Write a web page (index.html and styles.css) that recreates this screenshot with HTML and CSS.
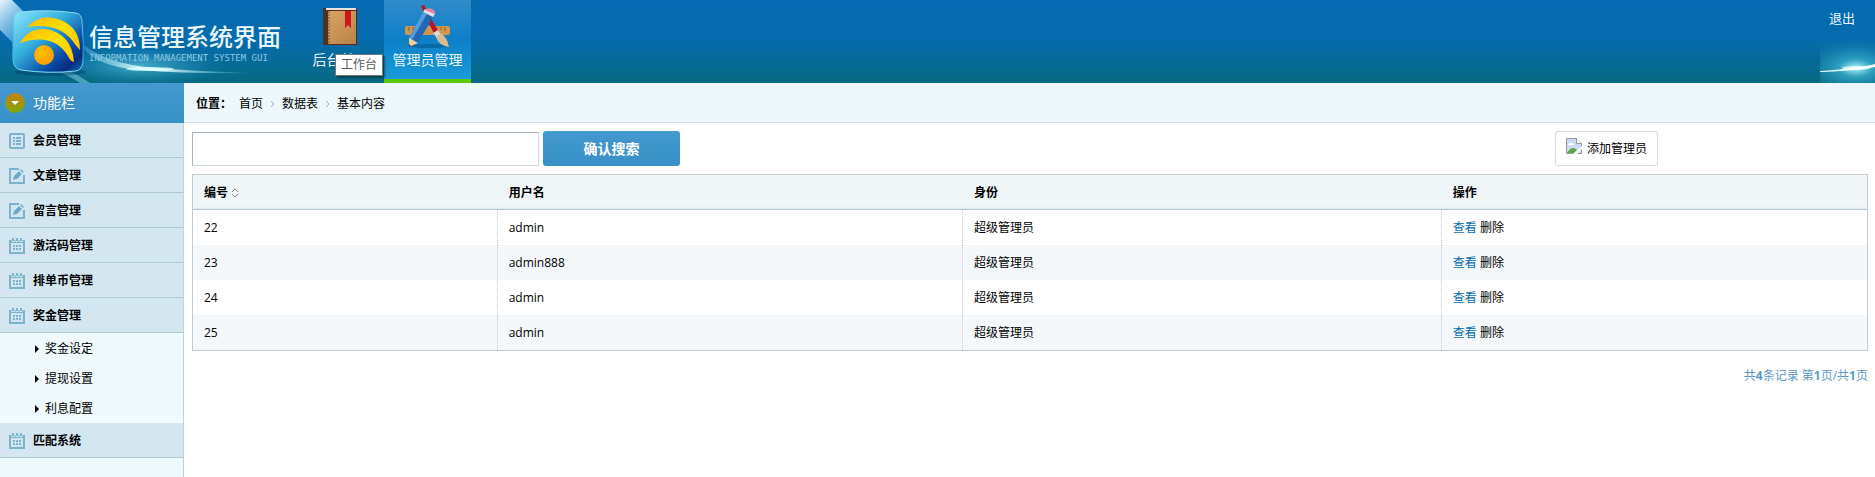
FILE: index.html
```
<!DOCTYPE html>
<html lang="zh-CN">
<head>
<meta charset="utf-8">
<title>信息管理系统界面</title>
<link rel="stylesheet" href="styles.css">
</head>
<body>

<!-- 图标 -->
<svg class="sprite" width="0" height="0">
	<symbol id="ico-list" viewBox="0 0 16 16">
		<rect x="1" y="1" width="14" height="14" rx="1" fill="none" stroke="#7db3cc" stroke-width="2"/>
		<path d="M4 5h2M7 5h5M4 8h2M7 8h5M4 11h2M7 11h5" stroke="#7db3cc" stroke-width="2"/>
	</symbol>
	<symbol id="ico-edit" viewBox="0 0 16 16">
		<path d="M10 1H1v14h14V7" fill="none" stroke="#7db3cc" stroke-width="2"/>
		<path d="M4 12l1-4 5-5 3 3-5 5zM11 2l1-1 3 3-1 1z" fill="#6fa9c6"/>
	</symbol>
	<symbol id="ico-date" viewBox="0 0 16 16">
		<path d="M1 3h14v12H1z" fill="none" stroke="#7db3cc" stroke-width="2"/>
		<path d="M1 4h14" stroke="#7db3cc" stroke-width="2"/>
		<path d="M4 0v4M8 0v4M12 0v4" stroke="#d4e7f0" stroke-width="3"/>
		<path d="M4 0v3M8 0v3M12 0v3" stroke="#7db3cc" stroke-width="2"/>
		<path d="M4 8h2M7 8h2M10 8h2M4 11h2M7 11h2M10 11h2" stroke="#7db3cc" stroke-width="2"/>
	</symbol>
</svg>

<header class="top">
	<a href="#" class="logo">
		<svg class="glow" width="300" height="83" viewBox="0 0 300 83" aria-hidden="true">
			<defs>
				<linearGradient id="ray" x1="0" y1="0" x2="1" y2="0">
					<stop offset="0" stop-color="#8fdcf5" stop-opacity=".2"/>
					<stop offset=".4" stop-color="#e8ffff"/>
					<stop offset="1" stop-color="#7fd8ee" stop-opacity="0"/>
				</linearGradient>
				<radialGradient id="halo">
					<stop offset="0" stop-color="#7fe0f5" stop-opacity=".8"/>
					<stop offset="1" stop-color="#2aa3cf" stop-opacity="0"/>
				</radialGradient>
				<linearGradient id="beam" gradientUnits="userSpaceOnUse" x1="0" y1="0" x2="60" y2="60">
					<stop offset="0" stop-color="#eaf6ff"/>
					<stop offset=".4" stop-color="#6fbbe8" stop-opacity=".7"/>
					<stop offset="1" stop-color="#5db7e6" stop-opacity="0"/>
				</linearGradient>
				<linearGradient id="tile" x1="0" y1="0" x2="1" y2="1">
					<stop offset="0" stop-color="#8fe6fa"/>
					<stop offset=".4" stop-color="#35b0df"/>
					<stop offset=".7" stop-color="#0a4fa8"/>
					<stop offset=".85" stop-color="#062a80"/>
					<stop offset="1" stop-color="#1376c8"/>
				</linearGradient>
				<linearGradient id="shine" x1="0" y1="0" x2="0" y2="1">
					<stop offset="0" stop-color="#8fdcf2"/>
					<stop offset=".6" stop-color="#2496cf"/>
					<stop offset="1" stop-color="#7ee4f5"/>
				</linearGradient>
				<radialGradient id="ball" cx=".4" cy=".35">
					<stop offset="0" stop-color="#ffc400"/>
					<stop offset="1" stop-color="#ffa200"/>
				</radialGradient>
				<linearGradient id="gold" x1="0" y1="0" x2="1" y2="1">
					<stop offset="0" stop-color="#ffb800"/>
					<stop offset=".5" stop-color="#ffe000"/>
					<stop offset="1" stop-color="#ffc400"/>
				</linearGradient>
			</defs>
			<path d="M0 0h12L40 28 20 50 0 30z" fill="url(#beam)"/>
			<path d="M62 68Q76 73 90 83H80Q70 76 58 72z" fill="#8ad8ea" opacity=".5"/>
			<ellipse cx="140" cy="66" rx="85" ry="20" fill="url(#halo)" opacity=".7"/>
			<path d="M80 42Q105 64 155 68T255 73Q190 74 140 70T80 42z" fill="url(#ray)"/>
			<ellipse cx="150" cy="69" rx="24" ry="2" fill="#dfffff" opacity=".8"/>
			<ellipse cx="50" cy="72" rx="36" ry="4" fill="#043a66" opacity=".4"/>
			<path d="M20 12Q48 9 76 13 82 14 82 22 84 44 83 62 82 70 76 71 48 74 21 70 14 69 13 60 12 42 14 18 15 12 20 12z" fill="url(#tile)" stroke="url(#shine)"/>
			<path d="M27 27Q38 15 54 18 80 24 80 50 76 46 72 40 57 22 27 27z" fill="url(#gold)"/>
			<path d="M20 43Q28 28 46 29 72 34 74 62 70 61 68 56 53 32 20 43z" fill="url(#gold)"/>
			<circle cx="44" cy="55" r="10" fill="url(#ball)"/>
		</svg>
		<span class="logo-text">
			<span class="logo-name">信息管理系统界面</span>
			<span class="logo-sub">INFORMATION MANAGEMENT SYSTEM GUI</span>
		</span>
	</a>
	<nav class="nav">
		<a href="#" class="nav-item">
			<svg width="45" height="45" viewBox="0 0 45 45" aria-hidden="true">
				<defs><linearGradient id="cover" x1="0" y1="0" x2="1" y2="1">
					<stop offset="0" stop-color="#d9a566"/><stop offset="1" stop-color="#b98348"/>
				</linearGradient></defs>
				<path d="M5 5h34v37H5z" fill="#5a2a18"/>
				<path d="M8 5h30v2H8z" fill="#e8e2da"/>
				<path d="M6 8h32v33H6z" fill="url(#cover)"/>
				<path d="M5 7h5v35H5z" fill="#4b332a"/>
				<path d="M11 8v33" stroke="#7b4c22" stroke-dasharray="2 1"/>
				<path d="M27 8h6v17l-3-3-3 3z" fill="#d3141c"/>
			</svg>
			<span>后台首页</span>
			<span class="tip">工作台</span>
		</a>
		<a href="#" class="nav-item selected">
			<svg width="45" height="45" viewBox="0 0 45 45" aria-hidden="true">
				<ellipse cx="24" cy="43" rx="20" ry="2" fill="#064f86" opacity=".5"/>
				<rect x="0" y="23" width="45" height="9" rx="2" fill="#cf9650"/>
				<path d="M4 24v4M8 24v3M12 24v4M16 24v3M28 24v3M32 24v4M36 24v3M40 24v4" stroke="#8a5c22"/>
				<path d="M16 3l3-1 15 28-4 3z" fill="#b81422"/>
				<path d="M28 30l5-3 3 5-4 3z" fill="#d5d9df"/>
				<path d="M31 34l5-4q6 4 8 14-11-2-13-10z" fill="#dcb98a"/>
				<path d="M18 9l10 5L13 40l-9-5z" fill="#2468b4"/>
				<path d="M18 9l4 2L7 37l-3-2z" fill="#4f9edb"/>
				<path d="M4 35l9 5-9 4z" fill="#f0cf96"/>
				<path d="M4 41l2 2-2 1z" fill="#333"/>
				<path d="M18 9l2-3 10 5-2 3z" fill="#d6e2ec"/>
				<path d="M20 7q2-3 7-1 4 2 3 5z" fill="#f07f98"/>
			</svg>
			<span>管理员管理</span>
		</a>
	</nav>
	<div class="topright">
		<svg class="flare" width="55" height="83" viewBox="0 0 55 83" aria-hidden="true">
			<defs><radialGradient id="flare">
				<stop offset="0" stop-color="#b9fbff"/>
				<stop offset=".3" stop-color="#3db4d2" stop-opacity=".7"/>
				<stop offset="1" stop-color="#1b86b5" stop-opacity="0"/>
			</radialGradient></defs>
			<ellipse cx="36" cy="68" rx="60" ry="30" fill="url(#flare)"/>
			<path d="M0 71Q35 69 55 64V67Q35 71 0 72z" fill="#e9ffff"/>
			<ellipse cx="36" cy="68" rx="14" ry="2" fill="#fff" opacity=".7"/>
		</svg>
		<a href="#" class="logout">退出</a>
	</div>
</header>

<div class="wrap">
	<aside class="left">
		<div class="lefttop">
			<svg width="22" height="22" viewBox="0 0 22 22" aria-hidden="true">
				<defs><linearGradient id="dot" x1="0" y1="0" x2="0" y2="1">
					<stop offset="0" stop-color="#c9820c"/><stop offset="1" stop-color="#7ba70e"/>
				</linearGradient></defs>
				<circle cx="11" cy="11" r="10" fill="url(#dot)"/>
				<path d="M7 9h8l-4 4z" fill="#fff"/>
			</svg>
			功能栏
		</div>
		<ul class="leftmenu">
			<li><a href="#" class="title"><svg width="16" height="16"><use href="#ico-list"/></svg>会员管理</a></li>
			<li><a href="#" class="title"><svg width="16" height="16"><use href="#ico-edit"/></svg>文章管理</a></li>
			<li><a href="#" class="title"><svg width="16" height="16"><use href="#ico-edit"/></svg>留言管理</a></li>
			<li><a href="#" class="title"><svg width="16" height="16"><use href="#ico-date"/></svg>激活码管理</a></li>
			<li><a href="#" class="title"><svg width="16" height="16"><use href="#ico-date"/></svg>排单币管理</a></li>
			<li>
				<a href="#" class="title"><svg width="16" height="16"><use href="#ico-date"/></svg>奖金管理</a>
				<ul class="menuson">
					<li><a href="#">奖金设定</a></li>
					<li><a href="#">提现设置</a></li>
					<li><a href="#">利息配置</a></li>
				</ul>
			</li>
			<li><a href="#" class="title"><svg width="16" height="16"><use href="#ico-date"/></svg>匹配系统</a></li>
		</ul>
	</aside>

	<main class="main">
		<div class="place">
			<b>位置：</b>
			<a href="#">首页</a>
			<svg width="5" height="8" viewBox="0 0 5 8" aria-hidden="true"><path d="M1 1l3 3-3 3" fill="none" stroke="#9aa9b3"/></svg>
			<a href="#">数据表</a>
			<svg width="5" height="8" viewBox="0 0 5 8" aria-hidden="true"><path d="M1 1l3 3-3 3" fill="none" stroke="#9aa9b3"/></svg>
			<a href="#">基本内容</a>
		</div>

		<div class="rightinfo">
			<form class="tools" action="#">
				<input type="text" class="dfinput" aria-label="搜索">
				<button type="submit" class="btn">确认搜索</button>
				<button type="button" class="add">
					<svg width="16" height="16" viewBox="0 0 16 16" aria-hidden="true">
						<path d="M.5.5h10l5 5v10H.500z" fill="#c9dbf5" stroke="#9a9a9a"/>
						<path d="M10.500.5v5h5" fill="#fff" stroke="#9a9a9a"/>
						<path d="M2 7q1-3 3-2 3 0 3 2z" fill="#fff"/>
						<path d="M1 15q5-8 10-3l-3 3z" fill="#55a845"/>
						<path d="M7 16l9-8v3l-5 5z" fill="#fff"/>
					</svg>
					添加管理员
				</button>
			</form>

			<table class="tablelist">
				<thead>
					<tr>
						<th class="col-id">编号<svg width="8" height="10" viewBox="0 0 8 10" aria-hidden="true"><path d="M1 4l3-3 3 3M1 6l3 3 3-3" fill="none" stroke="#7d8a92"/></svg></th>
						<th class="col-name">用户名</th>
						<th class="col-role">身份</th>
						<th>操作</th>
					</tr>
				</thead>
				<tbody>
					<tr><td>22</td><td>admin</td><td>超级管理员</td><td><a href="#" class="tablelink">查看</a> <a href="#">删除</a></td></tr>
					<tr><td>23</td><td>admin888</td><td>超级管理员</td><td><a href="#" class="tablelink">查看</a> <a href="#">删除</a></td></tr>
					<tr><td>24</td><td>admin</td><td>超级管理员</td><td><a href="#" class="tablelink">查看</a> <a href="#">删除</a></td></tr>
					<tr><td>25</td><td>admin</td><td>超级管理员</td><td><a href="#" class="tablelink">查看</a> <a href="#">删除</a></td></tr>
				</tbody>
			</table>

			<div class="pagin">共<b>4</b>条记录 第<b>1</b>页/共<b>1</b>页</div>
		</div>
	</main>
</div>

</body>
</html>
```
FILE: styles.css
```
* {
	box-sizing: border-box;
	margin: 0;
	padding: 0;
}
html, body {
	height: 100%;
}
body {
	display: flex;
	flex-direction: column;
	background: #fff;
	color: #000;
	font: 12px/20px "Open Sans", "Noto Sans CJK SC", sans-serif;
}
a {
	color: inherit;
	text-decoration: none;
}
ul {
	list-style: none;
}
svg {
	flex: none;
}
.sprite {
	position: absolute;
}

/* 头部 */
.top {
	display: flex;
	flex: none;
	height: 83px;
	background: linear-gradient(#056bb0, #056bae 45%, #066a82);
	color: #e9f8ff;
}
.logo {
	position: relative;
	width: 297px;
}
.glow, .flare {
	position: absolute;
	left: 0;
	top: 0;
}
.logo-text {
	position: relative;
	display: block;
	padding: 22px 0 0 89px;
	white-space: nowrap;
}
.logo-name, .logo-sub {
	display: block;
}
.logo-name {
	font-size: 24px;
	font-weight: 500;
	line-height: 30px;
}
.logo-sub {
	color: #8ccbe6;
	font: 9px/12px "DejaVu Sans Mono", monospace;
}
.nav {
	display: flex;
}
.nav-item {
	position: relative;
	display: flex;
	flex-direction: column;
	align-items: center;
	width: 87px;
	padding-top: 3px;
	font-size: 14px;
	line-height: 24px;
}
.nav-item.selected {
	border-bottom: 4px solid #5ec800;
	background: linear-gradient(#2f8cc8, #0d7fc8 50%, #1a9ad8);
}
.tip {
	position: absolute;
	left: 38px;
	top: 54px;
	z-index: 2;
	padding: 0 5px;
	border: 1px solid #767676;
	background: #fff;
	box-shadow: 2px 2px 2px rgba(0, 0, 0, .4);
	color: #575757;
	font-size: 12px;
	line-height: 20px;
	white-space: nowrap;
}
.topright {
	position: relative;
	width: 55px;
	margin-left: auto;
	padding: 8px 0 0 9px;
}
.logout {
	position: relative;
	font-size: 13px;
}

/* 左侧菜单 */
.wrap {
	display: flex;
	flex: 1;
}
.left {
	width: 184px;
	border-right: 1px solid #b7d5df;
	background: #f0f9fd;
}
.lefttop {
	display: flex;
	align-items: center;
	gap: 7px;
	height: 40px;
	margin-right: -1px;
	padding-left: 4px;
	background: linear-gradient(#4499cf, #3790c6);
	color: #fff;
	font-size: 14px;
}
.title {
	display: flex;
	align-items: center;
	gap: 8px;
	height: 35px;
	padding: 2px 0 0 9px;
	border-bottom: 1px solid #b0c8d3;
	background: #d4e7f0;
	font-weight: bold;
}
.menuson a {
	display: flex;
	align-items: center;
	gap: 6px;
	height: 30px;
	padding: 2px 0 0 35px;
}
.menuson a::before {
	content: "";
	border: 4px solid transparent;
	border-left-color: #000;
	border-right: 0;
}

/* 右侧内容 */
.main {
	flex: 1;
}
.place {
	display: flex;
	align-items: center;
	gap: 7px;
	height: 40px;
	padding: 2px 0 0 12px;
	border-bottom: 1px solid #d5e0e8;
	background: #edf6fa;
}
.rightinfo {
	padding: 8px 7px 8px 8px;
}
.tools {
	display: flex;
	align-items: center;
	gap: 4px;
	margin-bottom: 8px;
}
.dfinput {
	width: 347px;
	height: 34px;
	padding: 0 10px;
	border: 1px solid;
	border-color: #a7b5bc #ced9df #ced9df #a7b5bc;
	background: #fff;
	font: inherit;
}
.btn {
	width: 137px;
	height: 35px;
	border: 0;
	border-radius: 3px;
	background: linear-gradient(#4499cf, #3790c6);
	color: #fff;
	font: bold 14px/35px "Open Sans", "Noto Sans CJK SC", sans-serif;
}
.add {
	display: flex;
	align-items: center;
	gap: 5px;
	height: 35px;
	margin-left: auto;
	margin-right: 210px;
	padding: 0 10px;
	border: 1px solid #d3dbde;
	border-radius: 3px;
	background: #fff;
	font: inherit;
}
.add svg {
	margin-bottom: 5px;
}
.tablelist {
	width: 100%;
	border: 1px solid #c3cbd0;
	border-collapse: separate;
	border-spacing: 0;
	table-layout: fixed;
}
.tablelist th {
	height: 35px;
	padding: 1px 0 0 11px;
	border-bottom: 1px solid #b6cad2;
	background: linear-gradient(#f0f5f7 94%, #dfe8ec);
	text-align: left;
}
.tablelist th svg {
	margin-left: 3px;
	vertical-align: -1px;
}
.tablelist td {
	height: 35px;
	padding-left: 11px;
	border-right: 1px dotted #c7c7c7;
}
.tablelist td:last-child {
	border-right: 0;
}
.tablelist tbody tr:nth-child(even) {
	background: #f5f8fa;
}
.col-id {
	width: 18.2%;
}
.col-name {
	width: 27.8%;
}
.col-role {
	width: 28.6%;
}
.tablelink {
	color: #056dae;
}
.pagin {
	margin-top: 15px;
	color: #5a98c9;
	text-align: right;
}
```
